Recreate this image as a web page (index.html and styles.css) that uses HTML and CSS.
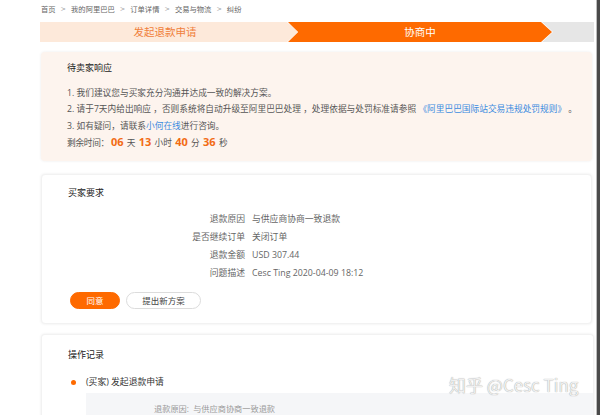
FILE: index.html
```html
<!DOCTYPE html>
<html lang="zh-CN">
<head>
<meta charset="utf-8">
<title>纠纷</title>
<link rel="stylesheet" href="styles.css">
</head>
<body>
<div class="main">
  <div class="crumbs">
    <span>首页</span><span class="sep">&gt;</span>
    <span>我的阿里巴巴</span><span class="sep">&gt;</span>
    <span>订单详情</span><span class="sep">&gt;</span>
    <span>交易与物流</span><span class="sep">&gt;</span>
    <span>纠纷</span>
  </div>
  <div class="steps">
    <div class="step step-done">发起退款申请</div>
    <div class="step-wrap"><div class="step step-cur">协商中</div></div>
  </div>

  <div class="card card-notice">
    <div class="card-title">待卖家响应</div>
    <div class="notice-lines">
      <p>1. 我们建议您与买家充分沟通并达成一致的解决方案。</p>
      <p>2. 请于7天内给出响应 ，否则系统将自动升级至阿里巴巴处理 ，处理依据与处罚标准请参照 <span class="link">《阿里巴巴国际站交易违规处罚规则》</span> 。</p>
      <p>3. 如有疑问，请联系<span class="link">小何在线</span>进行咨询。</p>
      <p class="timer"><span class="timer-lbl">剩余时间：</span><b>06</b> 天 <b>13</b> 小时 <b>40</b> 分 <b>36</b> 秒</p>
    </div>
  </div>

  <div class="card card-req">
    <div class="card-title">买家要求</div>
    <div class="rows">
      <div class="lbl">退款原因</div><div class="val">与供应商协商一致退款</div>
      <div class="lbl">是否继续订单</div><div class="val">关闭订单</div>
      <div class="lbl">退款金额</div><div class="val">USD 307.44</div>
      <div class="lbl">问题描述</div><div class="val">Cesc Ting 2020-04-09 18:12</div>
    </div>
    <div class="btns">
      <button class="btn btn-primary">同意</button>
      <button class="btn btn-ghost">提出新方案</button>
    </div>
  </div>

  <div class="card card-log">
    <div class="card-title">操作记录</div>
    <div class="log-item"><span class="dot"></span>(买家) 发起退款申请</div>
    <div class="log-box">退款原因:&nbsp; 与供应商协商一致退款</div>
  </div>
</div>
<div class="edge"></div>
<div class="watermark">知乎 @Cesc Ting</div>
</body>
</html>
```

FILE: styles.css
```css
html, body {
  margin: 0;
  padding: 0;
}
body {
  width: 600px;
  height: 415px;
  overflow: hidden;
  display: flex;
  background: #fff;
  font-family: "Open Sans", "Noto Sans CJK SC", sans-serif;
  color: #555;
  position: relative;
}
.main {
  flex: 1;
  padding: 0 2px 0 40px;
  min-width: 0;
}
.edge {
  width: 3px;
  background: #4a4a4a;
  border-left: 1px solid #bdbdbd;
}
.crumbs {
  height: 20px;
  display: flex;
  align-items: center;
  font-size: 7.3px;
  color: #666;
  padding-left: 1px;
  line-height: 18px;
  margin-top: -1px;
}
.crumbs .sep {
  margin: 0 5px;
  color: #999;
  font-family: "DejaVu Sans", sans-serif;
  font-size: 6.5px;
}
.steps {
  height: 20px;
  margin-top: 3px;
  display: flex;
  background: #e6e6e6;
  font-size: 10.5px;
}
.step {
  height: 20px;
  line-height: 20px;
  text-align: center;
}
.step-done {
  width: 258px;
  background: #fde9da;
  color: #f0803a;
  padding-right: 8px;
  box-sizing: border-box;
}
.step-wrap {
  width: 266px;
  margin-left: -11px;
  background: #fff;
  clip-path: polygon(0 0, calc(100% - 11px) 0, 100% 50%, calc(100% - 11px) 100%, 0 100%, 11px 50%);
}
.step-cur {
  margin-left: 1px;
  width: 264px;
  background: #fe6a00;
  color: #fff;
  clip-path: polygon(0 0, calc(100% - 11px) 0, 100% 50%, calc(100% - 11px) 100%, 0 100%, 10px 50%);
}
.card {
  margin: 0 2px 0 1px;
  border-radius: 4px;
  box-shadow: 0 0 3px rgba(0, 0, 0, 0.08);
  padding-left: 26px;
}
.card-title {
  font-size: 9px;
  line-height: 14px;
  color: #222;
}
.card-notice {
  margin-top: 10px;
  background: #fdf4ee;
  padding-top: 9px;
  padding-bottom: 10px;
}
.notice-lines {
  margin-top: 10px;
  font-size: 8.7px;
  line-height: 16.3px;
  color: #555;
}
.notice-lines p {
  margin: 0;
}
.link {
  color: #3b8be0;
}
.timer-lbl {
  letter-spacing: -0.3px;
  margin-right: 1px;
}
.timer b {
  color: #f26b14;
  font-size: 11px;
  font-weight: bold;
  margin: 0 1px;
}
.card-req {
  margin-top: 13px;
  background: #fff;
  padding-top: 11px;
  padding-bottom: 14px;
  border: 1px solid #f2f2f2;
}
.rows {
  margin-top: 10px;
  display: grid;
  grid-template-columns: 177px auto;
  column-gap: 7px;
  font-size: 8.8px;
  line-height: 18px;
  color: #666;
}
.lbl {
  text-align: right;
}
.btns {
  margin-top: 10px;
  display: flex;
  gap: 6px;
  padding-left: 2px;
}
.btn {
  height: 17px;
  border-radius: 9px;
  font-family: inherit;
  font-size: 8.5px;
  padding: 0;
  line-height: 15px;
  cursor: pointer;
}
.btn-primary {
  width: 50px;
  background: #fe6a00;
  border: 1px solid #fe6a00;
  color: #fff;
}
.btn-ghost {
  width: 75px;
  background: #fff;
  border: 1px solid #dcdcdc;
  color: #444;
}
.card-log {
  margin-top: 10px;
  background: #fff;
  padding-top: 13px;
  border: 1px solid #f2f2f2;
  border-bottom: none;
  margin-right: 0;
  height: 80px;
}
.log-item {
  margin-top: 13px;
  font-size: 8.8px;
  line-height: 14px;
  color: #333;
  display: flex;
  align-items: center;
  padding-left: 3px;
}
.dot {
  width: 5px;
  height: 5px;
  border-radius: 50%;
  background: #fe6a00;
  margin-right: 10px;
}
.log-box {
  margin-top: 4px;
  margin-left: 18px;
  background: #f5f6f8;
  font-size: 8.2px;
  color: #999;
  line-height: 12px;
  padding: 10px 0 4px 68px;
}
.watermark {
  position: absolute;
  left: 449px;
  top: 372px;
  font-family: "Noto Sans CJK SC", sans-serif;
  font-size: 17px;
  color: #f0f0f0;
  text-shadow: 0 0 1px #8a8a8a;
  white-space: nowrap;
}
```
